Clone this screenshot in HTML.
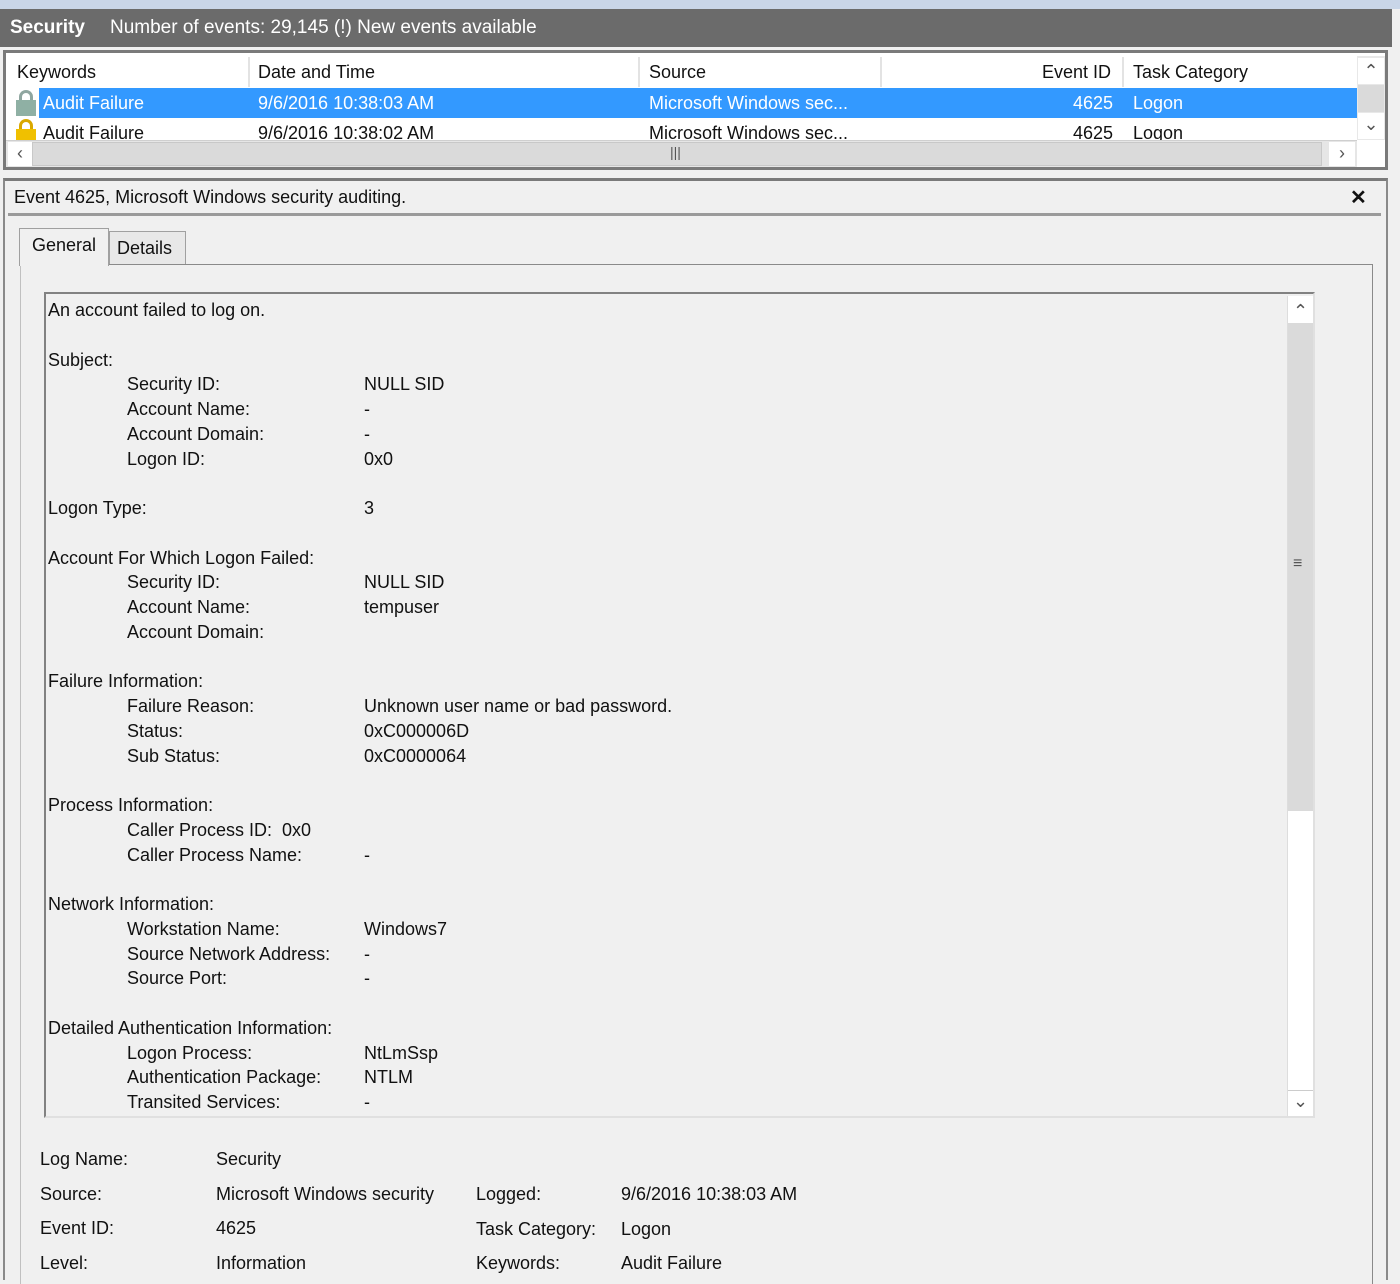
<!DOCTYPE html>
<html><head><meta charset="utf-8"><style>
*{margin:0;padding:0;box-sizing:border-box}
body{width:1400px;height:1280px;background:#f0f0f0;font-family:"Liberation Sans",sans-serif;font-size:18px;color:#111;position:relative;overflow:hidden}
.a{position:absolute;white-space:nowrap}
.t{position:absolute;white-space:nowrap;line-height:24.75px}
.ar{font-size:18px;color:#555;text-align:center}
</style></head><body>
<div class="a" style="left:0;top:0;width:1400px;height:9px;background:#c9d6e8"></div>
<div class="a" style="left:0;top:9px;width:1392px;height:38px;background:#6b6b6b"></div>
<div class="a" style="left:10px;top:17px;color:#fff;font-weight:bold;font-size:19px">Security</div>
<div class="a" style="left:110px;top:17px;color:#fff;font-size:19px">Number of events: 29,145 (!) New events available</div>
<div class="a" style="left:1392px;top:9px;width:8px;height:170px;background:#f0f0f0"></div>
<!-- list -->
<div class="a" style="left:3px;top:50px;width:1385px;height:120px;border:3px solid #7a7a7a;background:#fff"></div>
<div class="a" style="left:6px;top:56px;width:1351px;height:32px;background:#fff"></div>
<div class="a" style="left:248px;top:57px;width:2px;height:30px;background:#e3e3e3"></div>
<div class="a" style="left:638px;top:57px;width:2px;height:30px;background:#e3e3e3"></div>
<div class="a" style="left:880px;top:57px;width:2px;height:30px;background:#e3e3e3"></div>
<div class="a" style="left:1122px;top:57px;width:2px;height:30px;background:#e3e3e3"></div>
<div class="a" style="left:17px;top:62px">Keywords</div>
<div class="a" style="left:258px;top:62px">Date and Time</div>
<div class="a" style="left:649px;top:62px">Source</div>
<div class="a" style="left:1042px;top:62px">Event ID</div>
<div class="a" style="left:1133px;top:62px">Task Category</div>
<div class="a" style="left:39px;top:88px;width:1318px;height:30px;background:#3399ff"></div>
<div class="a" style="left:15px;top:90px;width:22px;height:26px"><div class="a" style="left:4px;top:0;width:14px;height:14px;border:3px solid #8fa6a0;border-bottom:none;border-radius:7px 7px 0 0"></div><div class="a" style="left:1px;top:10px;width:20px;height:16px;background:#8fb0a4"></div></div>
<div class="a" style="left:15px;top:119px;width:22px;height:21px;overflow:hidden"><div class="a" style="left:4px;top:0;width:14px;height:14px;border:3px solid #d9a800;border-bottom:none;border-radius:7px 7px 0 0"></div><div class="a" style="left:1px;top:10px;width:20px;height:16px;background:#f0c000"></div></div>
<div class="a" style="left:43px;top:93px;color:#fff">Audit Failure</div>
<div class="a" style="left:258px;top:93px;color:#fff">9/6/2016 10:38:03 AM</div>
<div class="a" style="left:649px;top:93px;color:#fff">Microsoft Windows sec...</div>
<div class="a" style="left:1073px;top:93px;color:#fff">4625</div>
<div class="a" style="left:1133px;top:93px;color:#fff">Logon</div>
<div class="a" style="left:6px;top:118px;width:1351px;height:22px;overflow:hidden">
<div class="a" style="left:37px;top:5px">Audit Failure</div>
<div class="a" style="left:252px;top:5px">9/6/2016 10:38:02 AM</div>
<div class="a" style="left:643px;top:5px">Microsoft Windows sec...</div>
<div class="a" style="left:1067px;top:5px">4625</div>
<div class="a" style="left:1127px;top:5px">Logon</div>
</div>
<div class="a" style="left:6px;top:140px;width:1351px;height:27px;background:#e6e6e6;border-top:1px solid #cfcfcf"></div>
<div class="a ar" style="left:8px;top:142px;width:24px;height:24px;background:#fff;line-height:22px">&lsaquo;</div>
<div class="a" style="left:32px;top:142px;width:1290px;height:24px;background:#dadada;border:1px solid #c8c8c8"></div>
<div class="a" style="left:670px;top:144px;font-size:14px;color:#555">|||</div>
<div class="a ar" style="left:1329px;top:142px;width:26px;height:24px;background:#fff;line-height:22px">&rsaquo;</div>
<div class="a" style="left:1357px;top:56px;width:28px;height:84px;background:#e8e8e8"></div>
<div class="a ar" style="left:1358px;top:58px;width:26px;height:26px;background:#fff;line-height:26px">&#8963;</div>
<div class="a" style="left:1358px;top:85px;width:26px;height:27px;background:#dadada"></div>
<div class="a ar" style="left:1358px;top:113px;width:26px;height:26px;background:#fff;line-height:22px">&#8964;</div>
<!-- detail -->
<div class="a" style="left:3px;top:178px;width:1385px;height:1102px;border-top:3px solid #7a7a7a;border-left:2px solid #8a8a8a;border-right:2px solid #8a8a8a"></div>
<div class="a" style="left:14px;top:187px">Event 4625, Microsoft Windows security auditing.</div>
<div class="a" style="left:1350px;top:185px;font-weight:bold;font-size:20px">&#10005;</div>
<div class="a" style="left:8px;top:213px;width:1373px;height:3px;background:#9a9a9a"></div>
<div class="a" style="left:20px;top:264px;width:1353px;height:1020px;border-top:1px solid #8a8a8a;border-left:1px solid #c0c0c0;border-right:1px solid #8a8a8a;background:#f0f0f0"></div>
<div class="a" style="left:19px;top:228px;width:90px;height:38px;background:#f0f0f0;border:1px solid #a0a0a0;border-bottom:none"></div>
<div class="a" style="left:32px;top:235px">General</div>
<div class="a" style="left:109px;top:231px;width:77px;height:33px;background:#e8e8e8;border:1px solid #a0a0a0;border-bottom:none"></div>
<div class="a" style="left:117px;top:238px">Details</div>
<div class="a" style="left:44px;top:292px;width:1271px;height:826px;border:2px solid #828282;border-right-color:#e0e0e0;border-bottom-color:#e0e0e0;background:#f0f0f0"></div>
<div class="a" style="left:1287px;top:296px;width:26px;height:820px;background:#fff;border-left:1px solid #ddd"></div>
<div class="a ar" style="left:1288px;top:297px;width:25px;height:25px;line-height:28px">&#8963;</div>
<div class="a" style="left:1288px;top:323px;width:25px;height:488px;background:#dadada"></div>
<div class="a" style="left:1293px;top:555px;font-size:16px;color:#555">&#8801;</div>
<div class="a ar" style="left:1288px;top:1090px;width:25px;height:25px;line-height:20px;border-top:1px solid #ccc">&#8964;</div>
<div class="t" style="left:48px;top:298px">An account failed to log on.<br><br>Subject:<br><br><br><br><br><br>Logon Type:<br><br>Account For Which Logon Failed:<br><br><br><br><br>Failure Information:<br><br><br><br><br>Process Information:<br><br><br><br>Network Information:<br><br><br><br><br>Detailed Authentication Information:</div>
<div class="t" style="left:127px;top:298px"><br><br><br>Security ID:<br>Account Name:<br>Account Domain:<br>Logon ID:<br><br><br><br><br>Security ID:<br>Account Name:<br>Account Domain:<br><br><br>Failure Reason:<br>Status:<br>Sub Status:<br><br><br>Caller Process ID:&nbsp; 0x0<br>Caller Process Name:<br><br><br>Workstation Name:<br>Source Network Address:<br>Source Port:<br><br><br>Logon Process:<br>Authentication Package:<br>Transited Services:</div>
<div class="t" style="left:364px;top:298px"><br><br><br>NULL SID<br>-<br>-<br>0x0<br><br>3<br><br><br>NULL SID<br>tempuser<br><br><br><br>Unknown user name or bad password.<br>0xC000006D<br>0xC0000064<br><br><br><br>-<br><br><br>Windows7<br>-<br>-<br><br><br>NtLmSsp<br>NTLM<br>-</div>
<div class="t" style="left:40px;top:1142px;line-height:34.7px">Log Name:<br>Source:<br>Event ID:<br>Level:</div>
<div class="t" style="left:216px;top:1142px;line-height:34.7px">Security<br>Microsoft Windows security<br>4625<br>Information</div>
<div class="t" style="left:476px;top:1177px;line-height:34.7px">Logged:<br>Task Category:<br>Keywords:</div>
<div class="t" style="left:621px;top:1177px;line-height:34.7px">9/6/2016 10:38:03 AM<br>Logon<br>Audit Failure</div>
</body></html>
